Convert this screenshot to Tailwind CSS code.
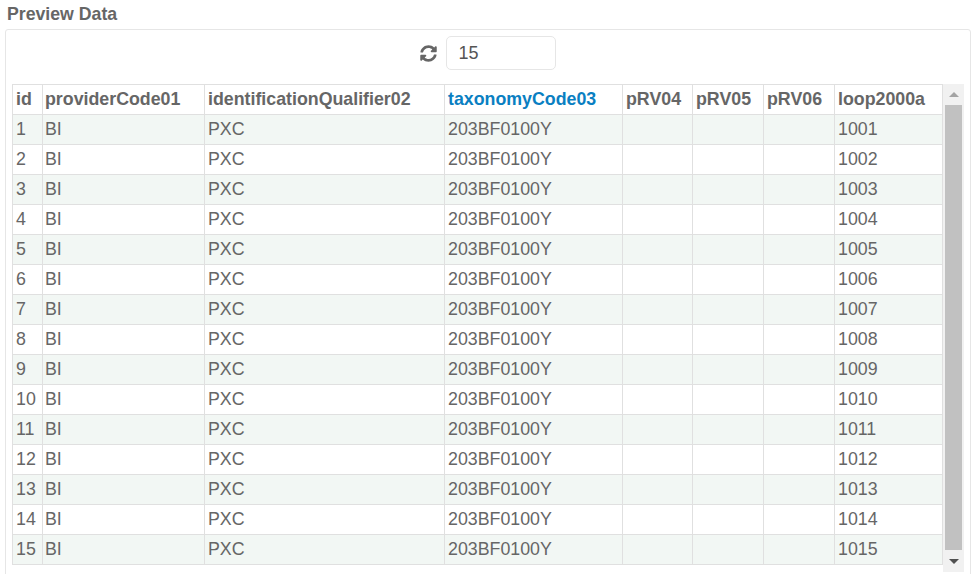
<!DOCTYPE html>
<html>
<head>
<meta charset="utf-8">
<title>Preview Data</title>
<script src="https://cdn.jsdelivr.net/npm/@tailwindcss/browser@4"></script>
</head>
<body class="bg-white overflow-hidden font-['Liberation_Sans',Arial,sans-serif] text-[#666] text-[17.8px]">
<div class="w-[975px] h-[574px] overflow-hidden pl-[5px] pr-1">
    <!-- Title -->
    <h3 class="pl-[2px] h-[29px] pt-[5px] leading-[18px] font-bold text-[17.7px] text-[#666]">Preview Data</h3>

    <!-- Panel -->
    <div class="w-[966px] h-[600px] border border-[#e6e6e6] rounded-[3px] px-[6px] pt-[6px]">
        <!-- Limit -->
        <div class="flex items-center justify-center h-[35px] gap-[9px] pr-[1px]">
            <svg class="w-[17px] h-[17px] text-[#666]" viewBox="0 0 512 512" fill="currentColor">
                <path d="M370.72 133.28C339.458 104.008 298.888 87.962 255.848 88c-77.458.068-144.328 53.178-162.791 126.85-1.344 5.363-6.122 9.15-11.651 9.15H24.103c-7.498 0-13.194-6.807-11.807-14.176C33.933 94.924 134.813 8 256 8c66.448 0 126.791 26.136 171.315 68.685L463.03 40.97C478.149 25.851 504 36.559 504 57.941V192c0 13.255-10.745 24-24 24H345.941c-21.382 0-32.09-25.851-16.971-40.971l41.75-41.749zM32 296h134.059c21.382 0 32.09 25.851 16.971 40.971l-41.75 41.75c31.262 29.273 71.835 45.319 114.876 45.28 77.418-.07 144.315-53.144 162.787-126.849 1.344-5.363 6.122-9.15 11.651-9.15h57.304c7.498 0 13.194 6.807 11.807 14.176C478.067 417.076 377.187 504 256 504c-66.448 0-126.791-26.136-171.315-68.685L48.97 471.03C33.851 486.149 8 475.441 8 454.059V320c0-13.255 10.745-24 24-24z"/>
            </svg>
            <input type="text" value="15" class="w-[110px] h-[34px] -mt-[1px] px-3 border border-[#e6e6e6] rounded-[5px] text-[#555] text-[18px] outline-none">
        </div>

        <!-- Grid with scrollbar -->
        <div class="flex items-start mt-[13px]">
            <table class="table-fixed border-collapse w-[931px] [&_th]:border [&_th]:border-[#e0e0e0] [&_th]:h-[30px] [&_th]:px-[3px] [&_th]:pb-[1px] [&_th]:text-left [&_th]:font-bold [&_td]:border [&_td]:border-[#e0e0e0] [&_td]:h-[30px] [&_td]:px-[3px] [&_td]:pb-[1px] [&_td]:whitespace-nowrap [&_th:nth-child(2)]:pl-[2px] [&_td:nth-child(2)]:pl-[2px]">
                <colgroup>
                    <col class="w-[30px]"><col class="w-[162px]"><col class="w-[240px]"><col class="w-[178px]">
                    <col class="w-[70px]"><col class="w-[71px]"><col class="w-[71px]"><col class="w-[108px]">
                </colgroup>
                <thead>
                    <tr>
                        <th>id</th>
                        <th>providerCode01</th>
                        <th>identificationQualifier02</th>
                        <th class="text-[#0a7fc2]">taxonomyCode03</th>
                        <th>pRV04</th>
                        <th>pRV05</th>
                        <th>pRV06</th>
                        <th>loop2000a</th>
                    </tr>
                </thead>
                <tbody id="rows"></tbody>
            </table>

            <!-- Scrollbar -->
            <div class="w-[21px] h-[488px] bg-[#f1f1f1] flex flex-col items-center shrink-0">
                <div class="h-[21px] w-full flex items-center justify-center">
                    <div class="w-0 h-0 border-x-[5px] border-x-transparent border-b-[5px] border-b-[#a3a3a3]"></div>
                </div>
                <div class="w-[17px] h-[445px] bg-[#c1c1c1]"></div>
                <div class="h-[22px] w-full flex items-center justify-center">
                    <div class="w-0 h-0 border-x-[5px] border-x-transparent border-t-[5px] border-t-[#505050]"></div>
                </div>
            </div>
        </div>
    </div>
</div>

<script>
    // Fill the preview rows
    var tbody = document.getElementById('rows');
    for (var i = 1; i <= 15; i++) {
        var tr = document.createElement('tr');
        tr.className = i % 2 ? 'bg-[#f2f7f4]' : 'bg-white';
        tr.innerHTML = '<td>' + i + '</td><td>BI</td><td>PXC</td><td>203BF0100Y</td><td></td><td></td><td></td><td>' + (1000 + i) + '</td>';
        tbody.appendChild(tr);
    }
</script>
</body>
</html>
